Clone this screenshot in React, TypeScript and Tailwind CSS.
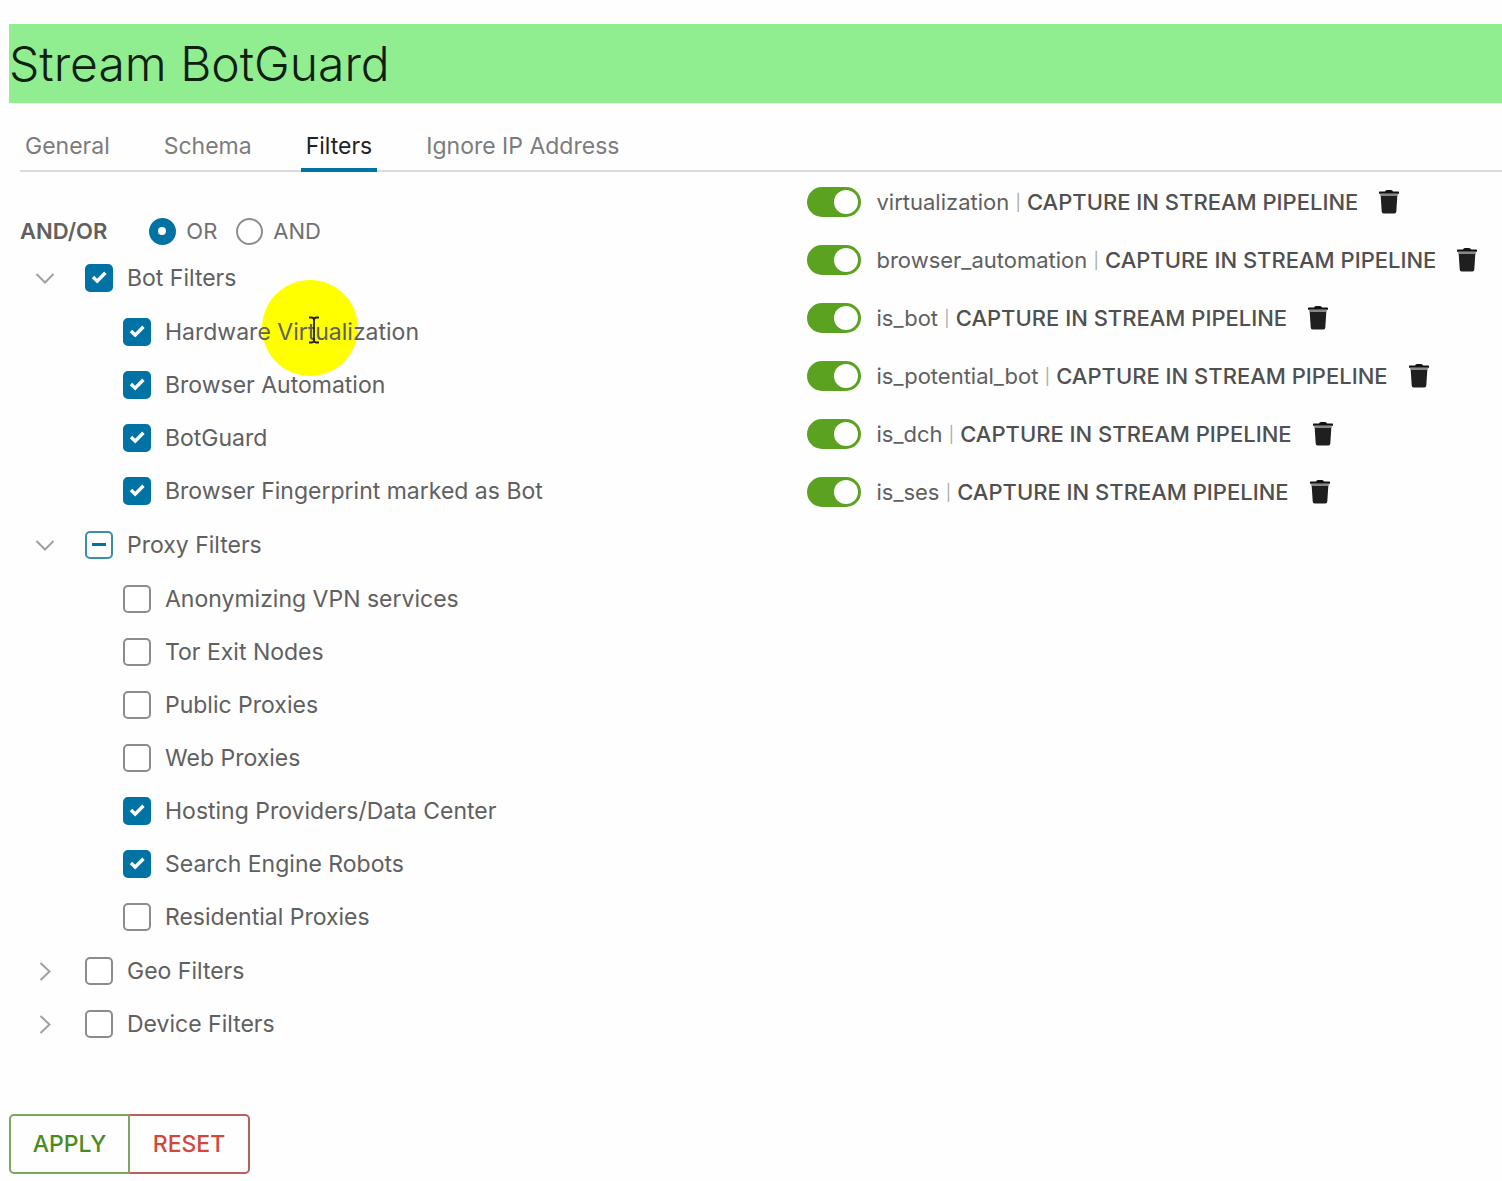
import { useState } from 'react';

type Filter = { label: string; checked: boolean; pointer?: boolean };
type Group = { label: string; open: boolean; state: 'on' | 'off' | 'mixed'; items: Filter[] };

const tabs = ['General', 'Schema', 'Filters', 'Ignore IP Address'];

const groups: Group[] = [
  {
    label: 'Bot Filters',
    open: true,
    state: 'on',
    items: [
      { label: 'Hardware Virtualization', checked: true, pointer: true },
      { label: 'Browser Automation', checked: true },
      { label: 'BotGuard', checked: true },
      { label: 'Browser Fingerprint marked as Bot', checked: true },
    ],
  },
  {
    label: 'Proxy Filters',
    open: true,
    state: 'mixed',
    items: [
      { label: 'Anonymizing VPN services', checked: false },
      { label: 'Tor Exit Nodes', checked: false },
      { label: 'Public Proxies', checked: false },
      { label: 'Web Proxies', checked: false },
      { label: 'Hosting Providers/Data Center', checked: true },
      { label: 'Search Engine Robots', checked: true },
      { label: 'Residential Proxies', checked: false },
    ],
  },
  { label: 'Geo Filters', open: false, state: 'off', items: [] },
  { label: 'Device Filters', open: false, state: 'off', items: [] },
];

const captures = ['virtualization', 'browser_automation', 'is_bot', 'is_potential_bot', 'is_dch', 'is_ses'];

function CheckBox({ id, checked, mixed = false }: { id: string; checked: boolean; mixed?: boolean }) {
  return (
    <span className="grid size-7 shrink-0 place-items-center">
      <input
        id={id}
        type="checkbox"
        defaultChecked={checked}
        ref={(el) => {
          if (el) el.indeterminate = mixed;
        }}
        className="peer col-start-1 row-start-1 size-7 appearance-none rounded-[5px] border-2 border-[#8c8c8c] bg-white checked:border-[#0072a3] checked:bg-[#0072a3] indeterminate:border-[#3b8eac]"
      />
      <svg
        viewBox="0 0 28 28"
        className="pointer-events-none invisible col-start-1 row-start-1 size-7 peer-checked:visible peer-indeterminate:invisible"
        fill="none"
        stroke="#fff"
        strokeWidth="3.4"
      >
        <path d="M8 13l4.2 4.200 8.200-8.400" />
      </svg>
      <span className="pointer-events-none invisible col-start-1 row-start-1 h-[3px] w-[14px] bg-[#0072a3] peer-indeterminate:visible" />
    </span>
  );
}

function Caret({ open }: { open: boolean }) {
  return (
    <svg viewBox="0 0 20 20" className="size-5" fill="none" stroke="#a0a0a0" strokeWidth="2">
      <path d={open ? 'M1.5 6l8.5 8.5L18.5 6' : 'M5.5 2l9 8.500L5.500 19'} />
    </svg>
  );
}

function TrashIcon() {
  return (
    <svg viewBox="0 0 22 26" className="h-[26px] w-[22px]">
      <path d="M7 2.6Q7.4 1 9 1h4q1.6 0 2 1.6h5.4q.6 0 .6.8v1.4H1V3.400q0-.8.6-.8z" fill="#111" />
      <path d="M2.200 4.800h17.600v2.200H2.200z" fill="#888" />
      <path d="M2.700 7h16.600l-1 15.600q-.1 2-2 2H5.700q-1.900 0-2-2z" fill="#1f1f1f" />
    </svg>
  );
}

function PointerHighlight() {
  return (
    <>
      <span className="absolute -top-[36px] left-[97px] -z-10 size-24 rounded-full bg-[#ffff00]" />
      <svg
        viewBox="0 0 12 28"
        className="absolute top-0 left-[143px] h-7 w-3"
        fill="none"
        stroke="#222"
        strokeWidth="1.8"
      >
        <path d="M1 1.500h2.500Q6 1.500 6 4v20q0 2.500-2.500 2.500H1M11 1.500H8.500Q6 1.500 6 4M6 24q0 2.500 2.500 2.500H11" />
      </svg>
    </>
  );
}

function FilterGroup({ group, index }: { group: Group; index: number }) {
  const [open, setOpen] = useState(group.open);
  const id = `group-${index}`;
  return (
    <li>
      <div className="flex h-[53px] items-center">
        <button
          type="button"
          aria-expanded={open}
          aria-label={`Toggle ${group.label}`}
          onClick={() => setOpen(!open)}
          className="mr-[30px] ml-[15px]"
        >
          <Caret open={open} />
        </button>
        <CheckBox id={id} checked={group.state === 'on'} mixed={group.state === 'mixed'} />
        <label htmlFor={id} className="ml-[14px]">
          {group.label}
        </label>
      </div>
      {open && group.items.length > 0 && (
        <ul className="py-px pl-[103px]">
          {group.items.map((item, i) => (
            <li key={item.label} className="flex h-[53px] items-center">
              <CheckBox id={`${id}-${i}`} checked={item.checked} />
              <label htmlFor={`${id}-${i}`} className="relative ml-[14px]">
                {item.label}
                {item.pointer && <PointerHighlight />}
              </label>
            </li>
          ))}
        </ul>
      )}
    </li>
  );
}

function Radio({ id, label, checked }: { id: string; label: string; checked: boolean }) {
  return (
    <span className="flex items-center gap-[10px]">
      <span className="grid size-7 place-items-center">
        <input
          id={id}
          type="radio"
          name="join"
          defaultChecked={checked}
          className="peer col-start-1 row-start-1 size-[27px] appearance-none rounded-full border-2 border-[#8c8c8c] bg-white checked:border-[#0072a3] checked:bg-[#0072a3]"
        />
        <span className="pointer-events-none invisible col-start-1 row-start-1 size-2 rounded-full bg-white peer-checked:visible" />
      </span>
      <label htmlFor={id} className="text-[#707070]">
        {label}
      </label>
    </span>
  );
}

export default function App() {
  const [active, setActive] = useState('Filters');
  return (
    <main className="min-h-screen bg-[#fefefe] pt-6 pb-2 pl-[9px] font-['Inter',sans-serif] text-[23px] leading-8 text-[#606060]">
      <h1 className="flex h-[79px] items-center bg-[#90ee90] text-[48px] leading-[56px] font-light text-[#102010]">
        Stream BotGuard
      </h1>

      <nav className="mt-[18px] ml-[11px] flex h-[51px] gap-11 border-b-2 border-[#d9dcde]">
        {tabs.map((tab) => (
          <button
            key={tab}
            type="button"
            onClick={() => setActive(tab)}
            className={
              tab === active
                ? '-mb-[2px] border-b-4 border-[#0072a3] px-[5px] pt-[2px] text-[#222]'
                : '-mb-[2px] border-b-4 border-transparent px-[5px] pt-[2px] text-[#7c7c7c]'
            }
          >
            {tab}
          </button>
        ))}
      </nav>

      <div className="ml-[11px] grid grid-cols-[53%_47%]">
        <section className="isolate pt-[39px]">
          <fieldset className="flex h-10 items-center text-[22px]">
            <legend className="float-left mr-[41px] font-semibold">AND/OR</legend>
            <div className="flex gap-[18px]">
              <Radio id="join-or" label="OR" checked />
              <Radio id="join-and" label="AND" checked={false} />
            </div>
          </fieldset>
          <ul>
            {groups.map((group, i) => (
              <FilterGroup key={group.label} group={group} index={i} />
            ))}
          </ul>
        </section>

        <ul className="pt-px pl-[2px] text-[22px] whitespace-nowrap">
          {captures.map((name) => (
            <li key={name} className="flex h-[58px] items-center">
              <input
                id={`capture-${name}`}
                type="checkbox"
                role="switch"
                defaultChecked
                className="h-[30px] w-[54px] shrink-0 appearance-none rounded-full border-[3px] border-[#999] bg-[#999] before:block before:size-6 before:rounded-full before:bg-white checked:border-[#5aa220] checked:bg-[#5aa220] checked:before:ml-6"
              />
              <label htmlFor={`capture-${name}`} className="ml-[15px]">
                {name} <span className="align-[2px] text-[16px] text-[#aaa]">|</span>{' '}
                <span className="font-medium text-[#505050]">CAPTURE IN STREAM PIPELINE</span>
              </label>
              <button type="button" aria-label={`Delete ${name}`} className="ml-5">
                <TrashIcon />
              </button>
            </li>
          ))}
        </ul>
      </div>

      <div className="mt-16 flex font-medium">
        <button
          type="button"
          className="h-[60px] w-[121px] rounded-l-[5px] border-2 border-[#7da761] text-[#4d8a22]"
        >
          APPLY
        </button>
        <button
          type="button"
          className="h-[60px] w-[120px] rounded-r-[5px] border-2 border-l-0 border-[#b5605c] text-[#cf4a3c]"
        >
          RESET
        </button>
      </div>
    </main>
  );
}
